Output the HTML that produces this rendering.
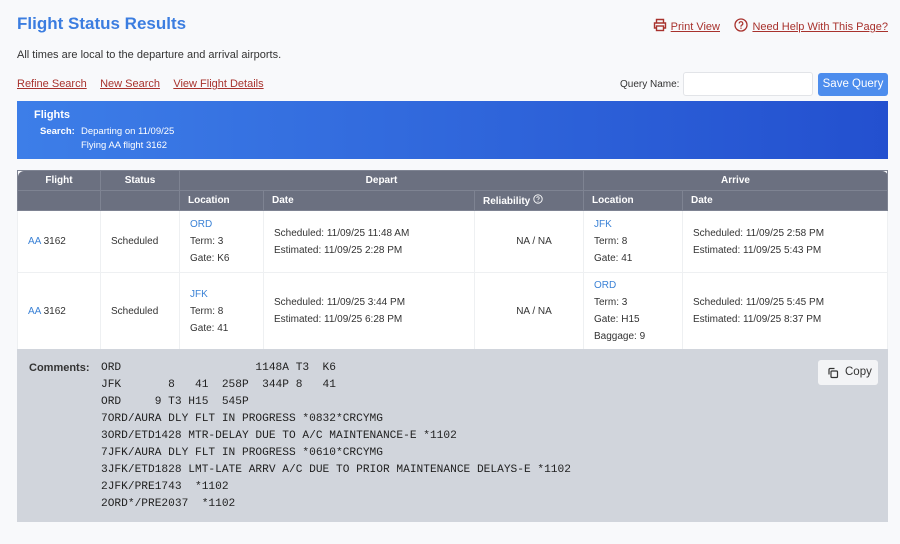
<!DOCTYPE html>
<html><head><meta charset="utf-8"><style>
*{box-sizing:border-box;margin:0;padding:0}
body{width:900px;height:544px;background:#f8f9fb;font-family:"Liberation Sans",sans-serif;color:#333;position:relative;overflow:hidden}
.a{position:absolute}
.red{color:#a8322d;text-decoration:underline;font-size:11px}
.blue{color:#3b82d6}
table{border-collapse:collapse;position:absolute;left:17px;top:170px;width:871px;font-size:10px}
th{background:#6b7080;color:#fff;font-weight:bold;height:20px;border:1px solid #7e8392;text-align:left;padding-left:8px;white-space:nowrap;line-height:12px}
td{background:#fff;border:1px solid #eef0f2;padding-left:10px;line-height:17px;vertical-align:middle}
pre{font-family:"Liberation Mono",monospace;font-size:11.2px;line-height:17px;color:#222}
</style></head><body>
<div class="a" style="left:17px;top:14px;font-size:17px;font-weight:bold;color:#3b7de0">Flight Status Results</div>
<div class="a" style="right:12px;top:17px;white-space:nowrap">
<svg width="14" height="14" viewBox="0 0 14 14" style="vertical-align:-2px;margin-right:4px"><g fill="none" stroke="#a8322d" stroke-width="1.4"><path d="M3.5 5V1.5h7V5M3.5 10H1.5V5h11v5h-2"/><rect x="3.5" y="8" width="7" height="4.5"/></g></svg><span class="red">Print View</span>
<svg width="14" height="14" viewBox="0 0 14 14" style="vertical-align:-2px;margin:0 4px 0 10px"><circle cx="7" cy="7" r="6" fill="none" stroke="#a8322d" stroke-width="1.3"/><path d="M5.2 5.5a1.8 1.8 0 1 1 2.4 1.7c-.5.2-.6.5-.6 1v.5" fill="none" stroke="#a8322d" stroke-width="1.2"/><circle cx="7" cy="10.2" r=".7" fill="#a8322d"/></svg><span class="red">Need Help With This Page?</span></div>
<div class="a" style="left:17px;top:49px;font-size:11px">All times are local to the departure and arrival airports.</div>
<div class="a" style="left:17px;top:74px;white-space:nowrap"><span class="red">Refine Search</span>&nbsp;&nbsp;&nbsp;<span class="red">New Search</span>&nbsp;&nbsp;&nbsp;<span class="red">View Flight Details</span></div>
<div class="a" style="left:620px;top:79px;font-size:10px">Query Name:</div>
<div class="a" style="left:683px;top:72px;width:130px;height:24px;background:#fff;border:1px solid #e2e4e8;border-radius:3px"></div>
<div class="a" style="left:818px;top:73px;width:70px;height:23px;background:#4d8ded;border-radius:3px;color:#fff;font-size:11.5px;text-align:center;line-height:23px">Save Query</div>
<div class="a" style="left:17px;top:101px;width:871px;height:58px;background:linear-gradient(90deg,#3d7ee8,#2350cf);color:#fff">
<div class="a" style="left:17px;top:8px;font-size:11px;font-weight:bold">Flights</div>
<div class="a" style="left:23px;top:25px;font-size:9.5px;font-weight:bold">Search:</div>
<div class="a" style="left:64px;top:24px;font-size:9.5px;line-height:14px">Departing on 11/09/25<br>Flying AA flight 3162</div></div>
<table>
<tr><th style="width:83px;text-align:center;padding:0;border-top-left-radius:6px">Flight</th><th style="width:79px;text-align:center;padding:0">Status</th><th colspan="3" style="text-align:center;padding:0">Depart</th><th colspan="2" style="text-align:center;padding:0;border-top-right-radius:6px">Arrive</th></tr>
<tr><th></th><th></th><th style="width:84px">Location</th><th style="width:211px">Date</th><th style="width:109px">Reliability <svg width="10" height="10" viewBox="0 0 10 10" style="vertical-align:0"><circle cx="5" cy="5" r="4.2" fill="none" stroke="#fff" stroke-width=".9"/><path d="M3.8 4a1.2 1.2 0 1 1 1.6 1.1c-.3.1-.4.3-.4.7" fill="none" stroke="#fff" stroke-width=".8"/><circle cx="5" cy="7.3" r=".5" fill="#fff"/></svg></th><th style="width:99px">Location</th><th>Date</th></tr>
<tr style="height:62px"><td><span class="blue">AA</span> 3162</td><td>Scheduled</td><td><span class="blue">ORD</span><br>Term: 3<br>Gate: K6</td><td>Scheduled: 11/09/25 11:48 AM<br>Estimated: 11/09/25 2:28 PM</td><td style="text-align:center">NA / NA</td><td><span class="blue">JFK</span><br>Term: 8<br>Gate: 41</td><td>Scheduled: 11/09/25 2:58 PM<br>Estimated: 11/09/25 5:43 PM</td></tr>
<tr style="height:77px"><td><span class="blue">AA</span> 3162</td><td>Scheduled</td><td><span class="blue">JFK</span><br>Term: 8<br>Gate: 41</td><td>Scheduled: 11/09/25 3:44 PM<br>Estimated: 11/09/25 6:28 PM</td><td style="text-align:center">NA / NA</td><td><span class="blue">ORD</span><br>Term: 3<br>Gate: H15<br>Baggage: 9</td><td>Scheduled: 11/09/25 5:45 PM<br>Estimated: 11/09/25 8:37 PM</td></tr>
</table>
<div class="a" style="left:17px;top:349px;width:871px;height:173px;background:#d1d5dc">
<div class="a" style="left:12px;top:13px;font-size:11px;font-weight:bold">Comments:</div>
<pre class="a" style="left:84px;top:11px">ORD                    1148A T3  K6
JFK       8   41  258P  344P 8   41
ORD     9 T3 H15  545P
7ORD/AURA DLY FLT IN PROGRESS *0832*CRCYMG
3ORD/ETD1428 MTR-DELAY DUE TO A/C MAINTENANCE-E *1102
7JFK/AURA DLY FLT IN PROGRESS *0610*CRCYMG
3JFK/ETD1828 LMT-LATE ARRV A/C DUE TO PRIOR MAINTENANCE DELAYS-E *1102
2JFK/PRE1743  *1102
2ORD*/PRE2037  *1102</pre>
<div class="a" style="left:801px;top:11px;width:60px;height:25px;background:#f3f4f6;border-radius:3px;font-size:11.5px;line-height:25px;padding-left:27px;color:#333">Copy
<svg class="a" style="left:9px;top:7px" width="12" height="12" viewBox="0 0 12 12" fill="none" stroke="#333" stroke-width="1.2"><rect x="4" y="4" width="6.5" height="6.5" rx="1"/><path d="M2 7.5V2.5a1 1 0 0 1 1-1h4.5"/></svg></div>
</div>
</body></html>
